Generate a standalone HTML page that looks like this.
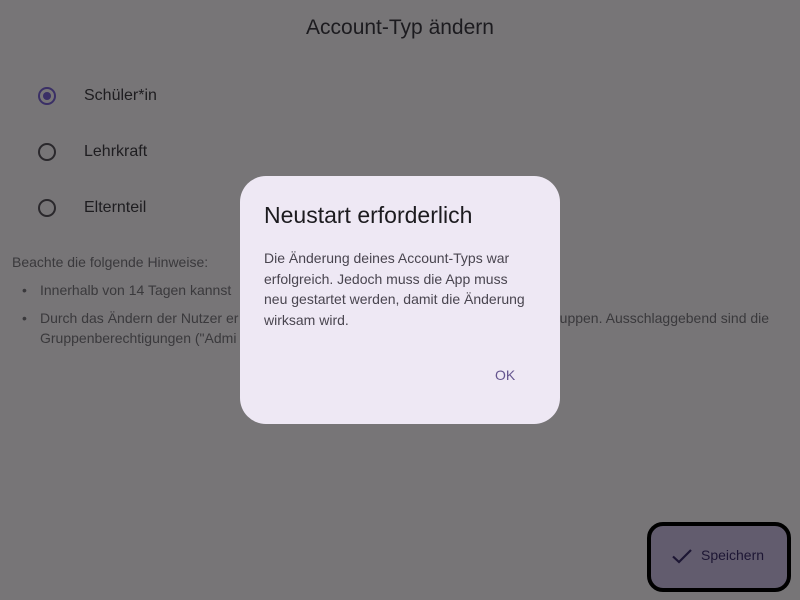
<!DOCTYPE html>
<html><head><meta charset="utf-8"><style>
html,body{margin:0;padding:0;}
body{width:800px;height:600px;background:#777577;position:relative;overflow:hidden;font-family:"Liberation Sans",sans-serif;color:#1c1b1f;}
.t{position:absolute;white-space:nowrap;}
.title{left:0;width:800px;text-align:center;top:16px;font-size:21px;color:#1c1b1f;}
.radio{position:absolute;left:38px;width:14px;height:14px;border:2px solid #2a282c;border-radius:50%;}
.radio.on{border-color:#3a2f66;}
.radio.on::after{content:"";position:absolute;left:3px;top:3px;width:8px;height:8px;border-radius:50%;background:#3a2f66;}
.lbl{left:84px;font-size:16px;color:#1e1d20;}
.hint{font-size:14px;color:#3a393c;}
.dlg{position:absolute;left:240px;top:176px;width:320px;height:248px;background:#eee8f4;border-radius:26px;}
.btn{position:absolute;left:647px;top:522px;width:136px;height:62px;border:4px solid #000;border-radius:16px;background:#625c6e;}
</style></head><body>
<div class="t title">Account-Typ ändern</div>
<div class="radio on" style="top:87px"></div><div class="t lbl" style="top:87px">Schüler*in</div>
<div class="radio" style="top:143px"></div><div class="t lbl" style="top:143px">Lehrkraft</div>
<div class="radio" style="top:199px"></div><div class="t lbl" style="top:199px">Elternteil</div>
<div class="t hint" style="left:12px;top:254px">Beachte die folgende Hinweise:</div>
<div class="t hint" style="left:22px;top:282px">•</div><div class="t hint" style="left:40px;top:282px">Innerhalb von 14 Tagen kannst</div>
<div class="t hint" style="left:22px;top:310px">•</div><div class="t hint" style="left:40px;top:310px">Durch das Ändern der Nutzer er</div>
<div class="t hint" style="left:555px;top:310px">ruppen. Ausschlaggebend sind die</div>
<div class="t hint" style="left:40px;top:330px">Gruppenberechtigungen ("Admi</div>
<div class="dlg">
<div class="t" style="left:24px;top:26px;font-size:23px;color:#1c1b1f">Neustart erforderlich</div>
<div class="t" style="left:24px;top:72px;font-size:14px;line-height:20.5px;color:#49454f">Die Änderung deines Account-Typs war<br>erfolgreich. Jedoch muss die App muss<br>neu gestartet werden, damit die Änderung<br>wirksam wird.</div>
<div class="t" style="left:255px;top:191px;font-size:14px;color:#65558f">OK</div>
</div>
<div class="btn">
<svg style="position:absolute;left:20px;top:21px" width="22" height="18" viewBox="0 0 22 18"><path d="M2 9.5 L8 15 L20 3" fill="none" stroke="#1d1634" stroke-width="2.2"/></svg>
<div class="t" style="left:50px;top:21px;font-size:14px;color:#1d1634">Speichern</div>
</div>
</body></html>
